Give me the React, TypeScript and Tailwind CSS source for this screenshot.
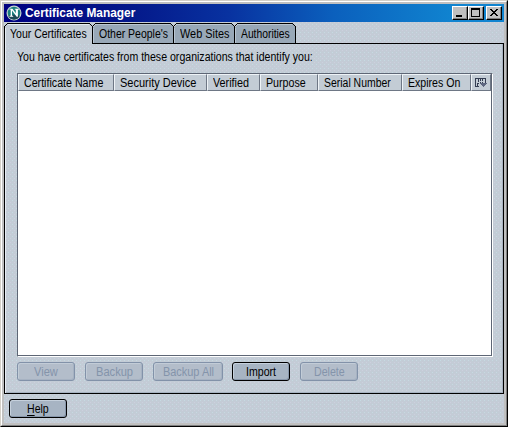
import React, { useLayoutEffect, useRef } from "react";

/** A single line of text condensed to the given pixel width. */
function Fit({ w, className = "", children }: { w: number; className?: string; children: React.ReactNode }) {
  const ref = useRef<HTMLSpanElement>(null);
  useLayoutEffect(() => {
    const el = ref.current;
    if (el) el.style.transform = `scaleX(${w / el.offsetWidth})`;
  }, [w]);
  return (
    <span className={`block h-[15px] shrink-0 ${className}`} style={{ width: w }}>
      <span ref={ref} className="block w-max origin-left whitespace-nowrap leading-[15px]">
        {children}
      </span>
    </span>
  );
}

function Tab({ label, w, size, width, active = false }: { label: string; w: number; size: number; width: string; active?: boolean }) {
  const bottom = active ? 21 : 20;
  const face = active ? "#c3ccd5" : "#98a8b7";
  return (
    <div className={`relative h-[21px] shrink-0 ${width}`}>
      <svg className="absolute inset-0 h-full w-full overflow-visible" shapeRendering="crispEdges">
        <path d={`M1 21V4L4 1H${size - 3}L${size} 4V21Z`} fill={face} />
        {!active && <rect x="0" y="20" width={size + 1} height="1" fill="#000" />}
        <path d={`M0.5 ${bottom}V3.5L3.5 0.5H${size - 2.5}L${size + 0.5} 3.5V${bottom}`} fill="none" stroke="#000" />
        <path d={`M1.5 ${bottom}V4.5M3.5 1.5H${size - 3}`} fill="none" stroke={active ? "#e6edf3" : "#b9c6d2"} />
      </svg>
      <Fit w={w} className={`relative mt-[4px] ${active ? "ml-[6px]" : "ml-[7px]"}`}>{label}</Fit>
    </div>
  );
}

function Column({ label, w, width }: { label: string; w: number; width: string }) {
  return (
    <div className={`h-[17px] shrink-0 border border-t-[#eef3f7] border-r-[#6e7785] border-b-[#6e7785] border-l-[#eef3f7] bg-[#c3ccd5] pl-[5px] pt-px ${width}`}>
      <Fit w={w}>{label}</Fit>
    </div>
  );
}

function Button({ children, w, width, disabled = false }: { children: React.ReactNode; w: number; width: string; disabled?: boolean }) {
  return (
    <button
      className={`flex h-[19px] shrink-0 items-start justify-center rounded-[3px] border pt-[2px] ${width} ${
        disabled
          ? "border-[#8292a9] bg-[#b3bdca] text-[#8494aa] shadow-[inset_1px_1px_0_#c2ccd7,inset_-1px_-1px_0_#a6b2c2]"
          : "border-black bg-[#a7b4c3] text-black shadow-[inset_1px_1px_0_#c5d0dc,inset_-1px_-1px_0_#8796aa]"
      }`}
    >
      <Fit w={w}>{children}</Fit>
    </button>
  );
}

function WindowButton({ kind }: { kind: "min" | "max" | "close" }) {
  return (
    <div className="h-[14px] w-4 border border-t-white border-r-black border-b-black border-l-white bg-[#c0c0c0] shadow-[inset_-1px_-1px_0_#808080]">
      <svg width="14" height="12" shapeRendering="crispEdges" className="block">
        {kind === "min" && <rect x="3" y="8" width="6" height="2" />}
        {kind === "max" && <path d="M2 1h9v9H2zM3 3v6h7V3z" fillRule="evenodd" />}
        {kind === "close" && (
          <path d="M3 2h2v1h1v1h2V3h1V2h2v1h-1v1H9v1H8v1h1v1h1v1h1v1H9V8H8V7H6v1H5v1H3V8h1V7h1V6h1V5H5V4H4V3H3z" />
        )}
      </svg>
    </div>
  );
}

export default function App() {
  return (
    <div className="h-[427px] w-[508px] cursor-default select-none border border-t-[#d4d0c8] border-r-black border-b-black border-l-[#d4d0c8] bg-[#c0c0c0] font-['Liberation_Sans',Arial,sans-serif] text-[12px] text-black">
      <div className="h-full border border-t-white border-r-[#808080] border-b-[#808080] border-l-white p-[2px]">
        <div className="flex h-full flex-col bg-[#c3ccd6] bg-[conic-gradient(at_1px_1px,transparent_75%,#c6dae2_0),conic-gradient(at_1px_1px,transparent_75%,#cdd0de_0)] bg-[length:4px_4px] [background-position:0_0,2px_2px]">
          <header className="flex h-[18px] shrink-0 items-center bg-[linear-gradient(90deg,#000080_0%,#04188a_25%,#0832a0_45%,#0b60bd_66%,#1084d0_90%)] px-[2px] text-white">
            <svg width="16" height="16" viewBox="0 0 16 16" className="shrink-0">
              <circle cx="8" cy="8" r="7.5" fill="#c9d3d3" />
              <circle cx="8" cy="8" r="6.3" fill="#1b7f7e" />
              <path d="M2.2 10.8Q8 8.8 13.8 10.8A6.3 6.3 0 0 1 2.2 10.8Z" fill="#1c4854" />
              <path d="M3.5 3.8h3l3.3 4.5V4.7l-1-.2v-.7H13v.7l-1.1.2v7h-1.2L6 5.6v5l1.2.3v.8H3.5v-.8l1.2-.3v-6l-1.2-.2Z" fill="white" />
            </svg>
            <Fit w={110} className="ml-[3px] font-bold">Certificate Manager</Fit>
            <div className="ml-auto flex">
              <WindowButton kind="min" />
              <WindowButton kind="max" />
              <div className="w-[2px]" />
              <WindowButton kind="close" />
            </div>
          </header>
          <nav className="mt-px flex h-[21px] shrink-0">
            <Tab label="Your Certificates" w={77} size={88} width="w-[88px]" active />
            <Tab label="Other People's" w={69} size={81} width="w-[81px]" />
            <Tab label="Web Sites" w={49} size={61} width="w-[61px]" />
            <Tab label="Authorities" w={49} size={61} width="w-[62px]" />
            <div className="grow border-b border-black" />
          </nav>
          <main className="h-[350px] shrink-0 border border-t-0 border-black pl-3 pr-[11px] shadow-[inset_1px_0_0_#e6edf3,inset_-1px_-1px_0_#a7b2c1]">
            <div className="pt-[6px]">
              <Fit w={296}>You have certificates from these organizations that identify you:</Fit>
            </div>
            <section className="mt-2 h-[284px] w-[476px] border border-t-[#5e6675] border-r-white border-b-white border-l-[#5e6675] bg-white">
              <div className="h-full border-b border-r border-[#5e6675]">
                <div className="flex h-[17px]">
                  <Column label="Certificate Name" w={79} width="w-[96px]" />
                  <Column label="Security Device" w={76} width="w-[93px]" />
                  <Column label="Verified" w={36} width="w-[53px]" />
                  <Column label="Purpose" w={40} width="w-[58px]" />
                  <Column label="Serial Number" w={67} width="w-[84px]" />
                  <Column label="Expires On" w={52} width="w-[69px]" />
                  <div className="h-[17px] grow border border-t-[#eef3f7] border-r-[#6e7785] border-b-[#6e7785] border-l-[#eef3f7] bg-[#c3ccd5]">
                    <svg width="17" height="15" shapeRendering="crispEdges" className="block">
                      <path d="M3 3h11v1H3zM3 4h1v8H3zM13 4h1v4h-1zM6 4h1v3H6zM8 4h1v2H8zM10 4h1v2h-1zM8 7h1v1H8zM10 7h1v1h-1zM5 8h2v1H5zM5 9h1v2H5zM3 11h4v1H3z" fill="#343d52" />
                      <path d="M8 8h7v1h-1v1h-1v1h-1v1h-1v-1h-1v-1H9V9H8z" fill="#5e6780" />
                    </svg>
                  </div>
                </div>
              </div>
            </section>
            <div className="mt-[5px] flex">
              <Button w={24} width="w-[58px]" disabled>View</Button>
              <div className="w-[10px]" />
              <Button w={37} width="w-[58px]" disabled>Backup</Button>
              <div className="w-[10px]" />
              <Button w={51} width="w-[70px]" disabled>Backup All</Button>
              <div className="w-[9px]" />
              <Button w={30} width="w-[58px]">Import</Button>
              <div className="w-[10px]" />
              <Button w={31} width="w-[58px]" disabled>Delete</Button>
            </div>
          </main>
          <footer className="pl-[5px] pt-[5px]">
            <Button w={22} width="w-[58px]">
              <span className="underline underline-offset-2">H</span>elp
            </Button>
          </footer>
        </div>
      </div>
    </div>
  );
}
